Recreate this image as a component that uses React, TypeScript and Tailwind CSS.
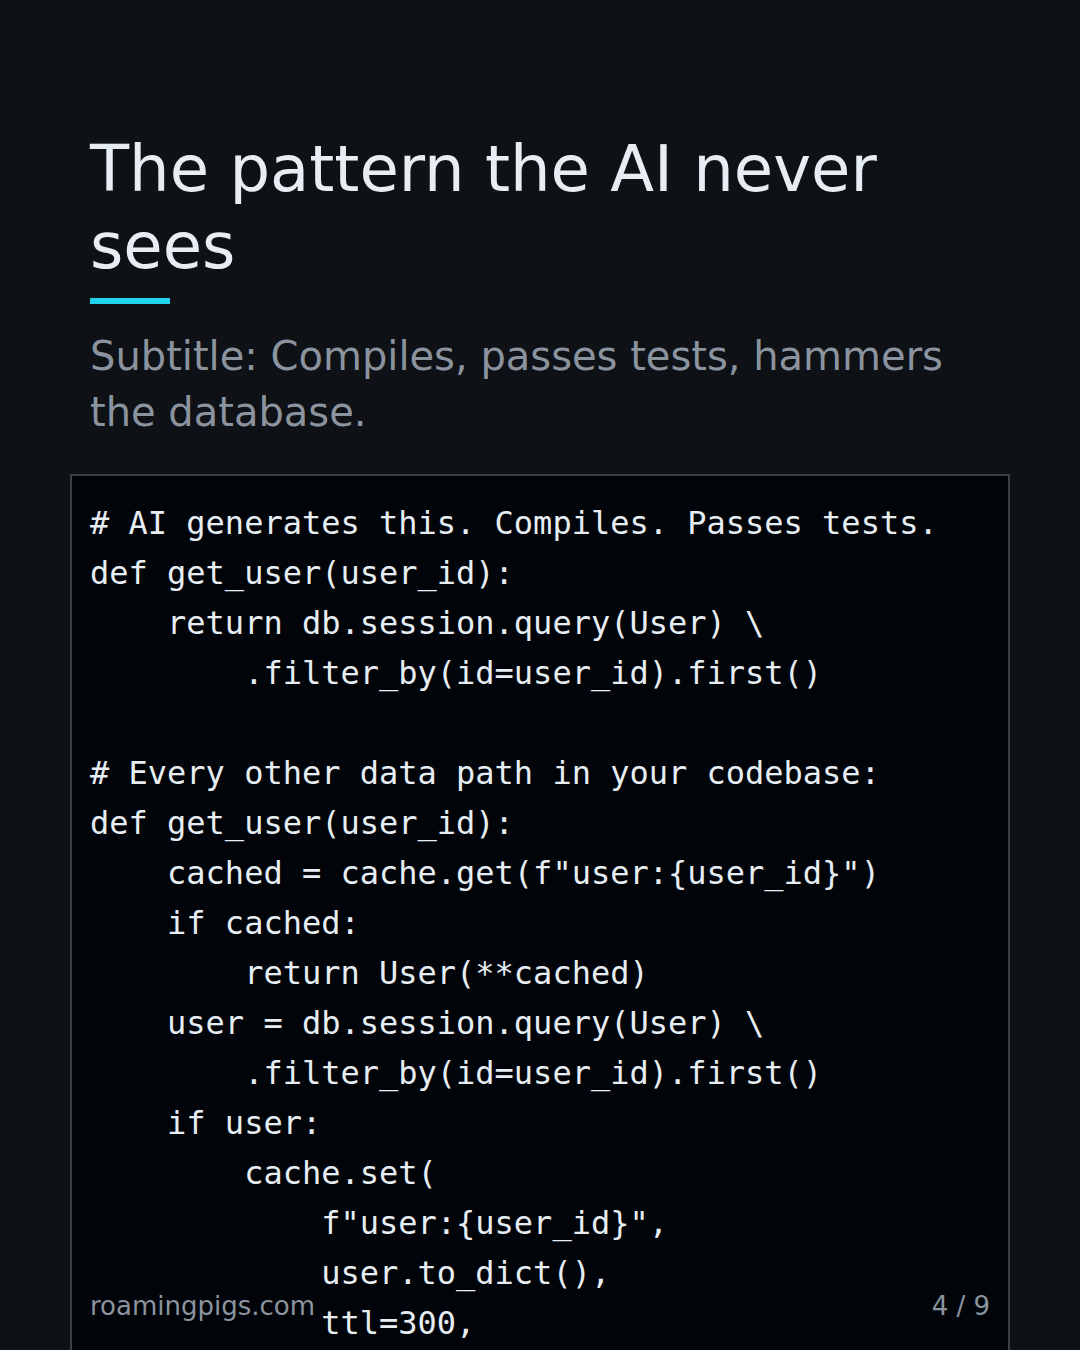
import React from 'react';

const code = `# AI generates this. Compiles. Passes tests.
def get_user(user_id):
    return db.session.query(User) \\
        .filter_by(id=user_id).first()

# Every other data path in your codebase:
def get_user(user_id):
    cached = cache.get(f"user:{user_id}")
    if cached:
        return User(**cached)
    user = db.session.query(User) \\
        .filter_by(id=user_id).first()
    if user:
        cache.set(
            f"user:{user_id}",
            user.to_dict(),
            ttl=300,
        )
    return user`;

const App: React.FC = () => {
  return (
    <div className="relative w-[1080px] h-[1350px] overflow-hidden bg-[#0e1116] font-['DejaVu_Sans',sans-serif]">
      <div className="px-[90px] pt-[131px] flex flex-col">
        <h1 className="text-[64px] leading-[1.2] font-normal text-[#e6edf3]">
          The pattern the AI never sees
        </h1>
        <div className="mt-[13px] w-20 h-[6px] bg-[#22d3ee]" />
        <p className="mt-6 text-[40px] leading-[56px] text-[#8b949e]">
          Subtitle: Compiles, passes tests, hammers the database.
        </p>
        <pre className="mt-[34px] -mx-5 border-2 border-[#3a3d42] bg-[#010409] pl-[18px] pr-4 pt-[22px] pb-6 font-['DejaVu_Sans_Mono',monospace] text-[32px] leading-[50px] text-[#e6edf3] whitespace-pre">
          {code}
        </pre>
      </div>

      <div className="absolute left-[90px] right-[90px] bottom-[29px] h-[30px] flex items-center justify-between text-[26px] leading-[30px] text-[#8b949e]">
        <span>roamingpigs.com</span>
        <span>4 / 9</span>
      </div>
    </div>
  );
};

export default App;
